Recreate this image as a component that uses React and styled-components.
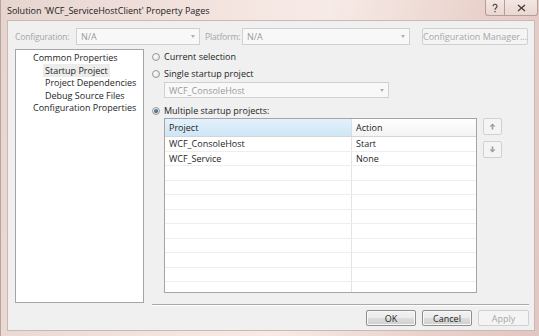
import React from "react";
import styled, { createGlobalStyle } from "styled-components";

const GlobalStyle = createGlobalStyle`
  html, body { margin: 0; padding: 0; }
  body {
    width: 539px;
    height: 336px;
    overflow: hidden;
    font-family: "Open Sans", "Noto Sans", sans-serif;
    font-size: 9px;
    color: #1e1e1e;
  }
`;

// window frame
const Window = styled.div`
  width: 539px;
  height: 336px;
  box-sizing: border-box;
  display: flex;
  flex-direction: column;
  background: linear-gradient(100deg, #e6d4cf 0%, #f3e3de 35%, #f7ebe7 55%, #ead2cc 80%, #e2c6c1 100%);
  border-left: 1px solid #b9a39f;
  padding: 0 4px 5px 6px;
`;

const TitleBar = styled.div`
  height: 20px;
  display: flex;
  align-items: flex-start;
  justify-content: space-between;
`;

const Title = styled.span`
  padding-top: 4px;
  font-size: 9px;
  color: #222;
`;

const Captions = styled.div`
  display: flex;
  margin-right: -3px;
`;

const CaptionBtn = styled.div`
  width: ${p => p.$w}px;
  height: 16px;
  box-sizing: border-box;
  border: 1px solid #b69d98;
  border-top: none;
  border-left: ${p => (p.$first ? "1px solid #b69d98" : "none")};
  border-radius: ${p => (p.$first ? "0 0 0 3px" : "0 0 3px 0")};
  background: linear-gradient(#f3e6e3, #e9d7d3);
  display: flex;
  align-items: center;
  justify-content: center;
`;

const Client = styled.div`
  flex: 1;
  background: #f0f0f0;
  border: 1px solid #c9b8b4;
  display: flex;
  flex-direction: column;
  padding: 6px 5px 4px 7px;
`;

const TopRow = styled.div`
  display: flex;
  align-items: center;
  height: 18px;
  margin-bottom: 4px;
`;

const Label = styled.span`
  flex-shrink: 0;
  color: #a6a6a6;
  font-size: 8.5px;
  letter-spacing: -0.15px;
  width: ${p => p.$w}px;
  white-space: nowrap;
`;

const Combo = styled.div`
  flex-shrink: 0;
  width: ${p => p.$w}px;
  height: ${p => p.$h || 17}px;
  box-sizing: border-box;
  border: 1px solid #d0d0d0;
  background: #f8f8f8;
  color: #9a9a9a;
  display: flex;
  align-items: center;
  justify-content: space-between;
  padding: 0 4px 0 4px;
  margin-right: ${p => p.$mr || 0}px;
`;

const Arrow = styled.span`
  width: 0;
  height: 0;
  border-left: 2.5px solid transparent;
  border-right: 2.5px solid transparent;
  border-top: 3px solid #b0b0b0;
`;

const Button = styled.div`
  flex-shrink: 0;
  white-space: nowrap;
  width: ${p => p.$w}px;
  height: ${p => p.$h || 16}px;
  box-sizing: border-box;
  border: 1px solid ${p => (p.$disabled ? "#d0d0d0" : "#8e8f8f")};
  border-radius: 2px;
  background: ${p =>
    p.$disabled
      ? "#f4f4f4"
      : "linear-gradient(#f2f2f2 0%, #ebebeb 50%, #dddddd 51%, #cfcfcf 100%)"};
  color: ${p => (p.$disabled ? "#a8a8a8" : "#1e1e1e")};
  display: flex;
  align-items: center;
  justify-content: center;
  box-shadow: inset 0 0 0 1px ${p => (p.$disabled ? "transparent" : "#f8f8f8")};
`;

const Main = styled.div`
  display: flex;
  flex: 1;
`;

const Tree = styled.div`
  width: 129px;
  box-sizing: border-box;
  border: 1px solid #a5a5a5;
  background: #fff;
  padding: 2px 0 0 0;
  display: flex;
  flex-direction: column;
  margin-right: 8px;
`;

const TreeItem = styled.div`
  height: 12.5px;
  line-height: 12.5px;
  padding-left: ${p => p.$indent}px;
  span {
    padding: 0 2px;
    background: ${p => (p.$sel ? "#ececec" : "transparent")};
  }
`;

const Right = styled.div`
  flex: 1;
  display: flex;
  flex-direction: column;
`;

const RadioRow = styled.div`
  display: flex;
  align-items: center;
  height: 13px;
  gap: 4px;
  margin-top: ${p => p.$mt || 0}px;
`;

const Radio = styled.span`
  width: 8px;
  height: 8px;
  border-radius: 50%;
  box-sizing: border-box;
  border: 1px solid #9a9a9a;
  background: radial-gradient(circle at 40% 40%, #ffffff, #d6d6d6);
  display: flex;
  align-items: center;
  justify-content: center;
  &::after {
    content: "";
    display: ${p => (p.$on ? "block" : "none")};
    width: 4px;
    height: 4px;
    border-radius: 50%;
    background: radial-gradient(circle at 40% 40%, #6a8fb0, #1c3e5e);
  }
`;

const Indented = styled.div`
  padding-left: 12px;
  margin-top: 2px;
`;

const GridRow = styled.div`
  display: flex;
  margin-top: 1px;
`;

const Grid = styled.div`
  width: 313px;
  height: 175px;
  box-sizing: border-box;
  border: 1px solid #a5a5a5;
  background: #fff;
  margin-left: 12px;
  overflow: hidden;
`;

const HeaderRow = styled.div`
  display: flex;
  height: 17px;
  border-bottom: 1px solid #d5d5d5;
`;

const HeadCell = styled.div`
  width: ${p => p.$w}px;
  box-sizing: border-box;
  padding-left: 4px;
  display: flex;
  align-items: center;
  border-right: ${p => (p.$last ? "none" : "1px solid #dedede")};
  background: ${p =>
    p.$hot ? "linear-gradient(#e3f1fb, #cfe6f6)" : "linear-gradient(#ffffff, #f3f3f3)"};
`;

const Row = styled.div`
  display: flex;
  height: 14.5px;
  box-sizing: border-box;
  border-bottom: 1px solid #eeeeee;
`;

const Cell = styled.div`
  width: ${p => p.$w}px;
  box-sizing: border-box;
  padding-left: 4px;
  display: flex;
  align-items: center;
  border-right: ${p => (p.$last ? "none" : "1px solid #e4e4e4")};
`;

const SideButtons = styled.div`
  display: flex;
  flex-direction: column;
  gap: 6px;
  margin-left: 6px;
`;

const Separator = styled.div`
  height: 1px;
  background: #a9a9a9;
  box-shadow: 0 1px 0 #ffffff;
  margin-top: auto;
  margin-bottom: -2px;
`;

const Footer = styled.div`
  display: flex;
  justify-content: flex-end;
  gap: 6px;
  padding-top: 7px;
`;

const projects = [
  { name: "WCF_ConsoleHost", action: "Start" },
  { name: "WCF_Service", action: "None" },
];

const emptyRows = Array.from({ length: 9 });

function SmallArrow({ up }) {
  return (
    <svg width="7" height="7" viewBox="0 0 7 7">
      <g fill="#9a9a9a" transform={up ? "" : "rotate(180 3.5 3.5)"}>
        <polygon points="3.5,0.5 6.5,3.5 0.5,3.5" />
        <rect x="2.7" y="3.5" width="1.6" height="3" />
      </g>
    </svg>
  );
}

export default function App() {
  return (
    <>
      <GlobalStyle />
      <Window>
        <TitleBar>
          <Title>Solution 'WCF_ServiceHostClient' Property Pages</Title>
          <Captions>
            <CaptionBtn $w={20} $first>
              <svg width="8" height="10" viewBox="0 0 8 10">
                <path d="M2 3.2a2 2 0 1 1 3 1.8c-.8.5-1 .9-1 1.7" fill="none" stroke="#4a3a38" strokeWidth="1.1" />
                <rect x="3.4" y="8" width="1.2" height="1.2" fill="#4a3a38" />
              </svg>
            </CaptionBtn>
            <CaptionBtn $w={33}>
              <svg width="9" height="8" viewBox="0 0 9 8">
                <path d="M1 1l7 6M8 1L1 7" stroke="#4a3a38" strokeWidth="1.3" fill="none" />
              </svg>
            </CaptionBtn>
          </Captions>
        </TitleBar>
        <Client>
          <TopRow>
            <Label $w={61}>Configuration:</Label>
            <Combo $w={124} $mr={5}>
              <span>N/A</span>
              <Arrow />
            </Combo>
            <Label $w={37}>Platform:</Label>
            <Combo $w={168} $mr={12}>
              <span>N/A</span>
              <Arrow />
            </Combo>
            <Button $w={106} $h={17} $disabled>
              Configuration Manager...
            </Button>
          </TopRow>
          <Main>
            <Tree>
              <TreeItem $indent={15}><span>Common Properties</span></TreeItem>
              <TreeItem $indent={27} $sel><span>Startup Project</span></TreeItem>
              <TreeItem $indent={27}><span>Project Dependencies</span></TreeItem>
              <TreeItem $indent={27}><span>Debug Source Files</span></TreeItem>
              <TreeItem $indent={15}><span>Configuration Properties</span></TreeItem>
            </Tree>
            <Right>
              <RadioRow $mt={1}>
                <Radio />
                <span>Current selection</span>
              </RadioRow>
              <RadioRow $mt={4}>
                <Radio />
                <span>Single startup project</span>
              </RadioRow>
              <Indented>
                <Combo $w={225} $h={16}>
                  <span>WCF_ConsoleHost</span>
                  <Arrow />
                </Combo>
              </Indented>
              <RadioRow $mt={6}>
                <Radio $on />
                <span>Multiple startup projects:</span>
              </RadioRow>
              <GridRow>
                <Grid>
                  <HeaderRow>
                    <HeadCell $w={187} $hot>Project</HeadCell>
                    <HeadCell $w={124} $last>Action</HeadCell>
                  </HeaderRow>
                  {projects.map(p => (
                    <Row key={p.name}>
                      <Cell $w={187}>{p.name}</Cell>
                      <Cell $w={124} $last>{p.action}</Cell>
                    </Row>
                  ))}
                  {emptyRows.map((_, i) => (
                    <Row key={i}>
                      <Cell $w={187} />
                      <Cell $w={124} $last />
                    </Row>
                  ))}
                </Grid>
                <SideButtons>
                  <Button $w={19} $h={17} $disabled>
                    <SmallArrow up />
                  </Button>
                  <Button $w={19} $h={17} $disabled>
                    <SmallArrow />
                  </Button>
                </SideButtons>
              </GridRow>
              <Separator />
            </Right>
          </Main>
          <Footer>
            <Button $w={50}>OK</Button>
            <Button $w={50}>Cancel</Button>
            <Button $w={51} $disabled>Apply</Button>
          </Footer>
        </Client>
      </Window>
    </>
  );
}
